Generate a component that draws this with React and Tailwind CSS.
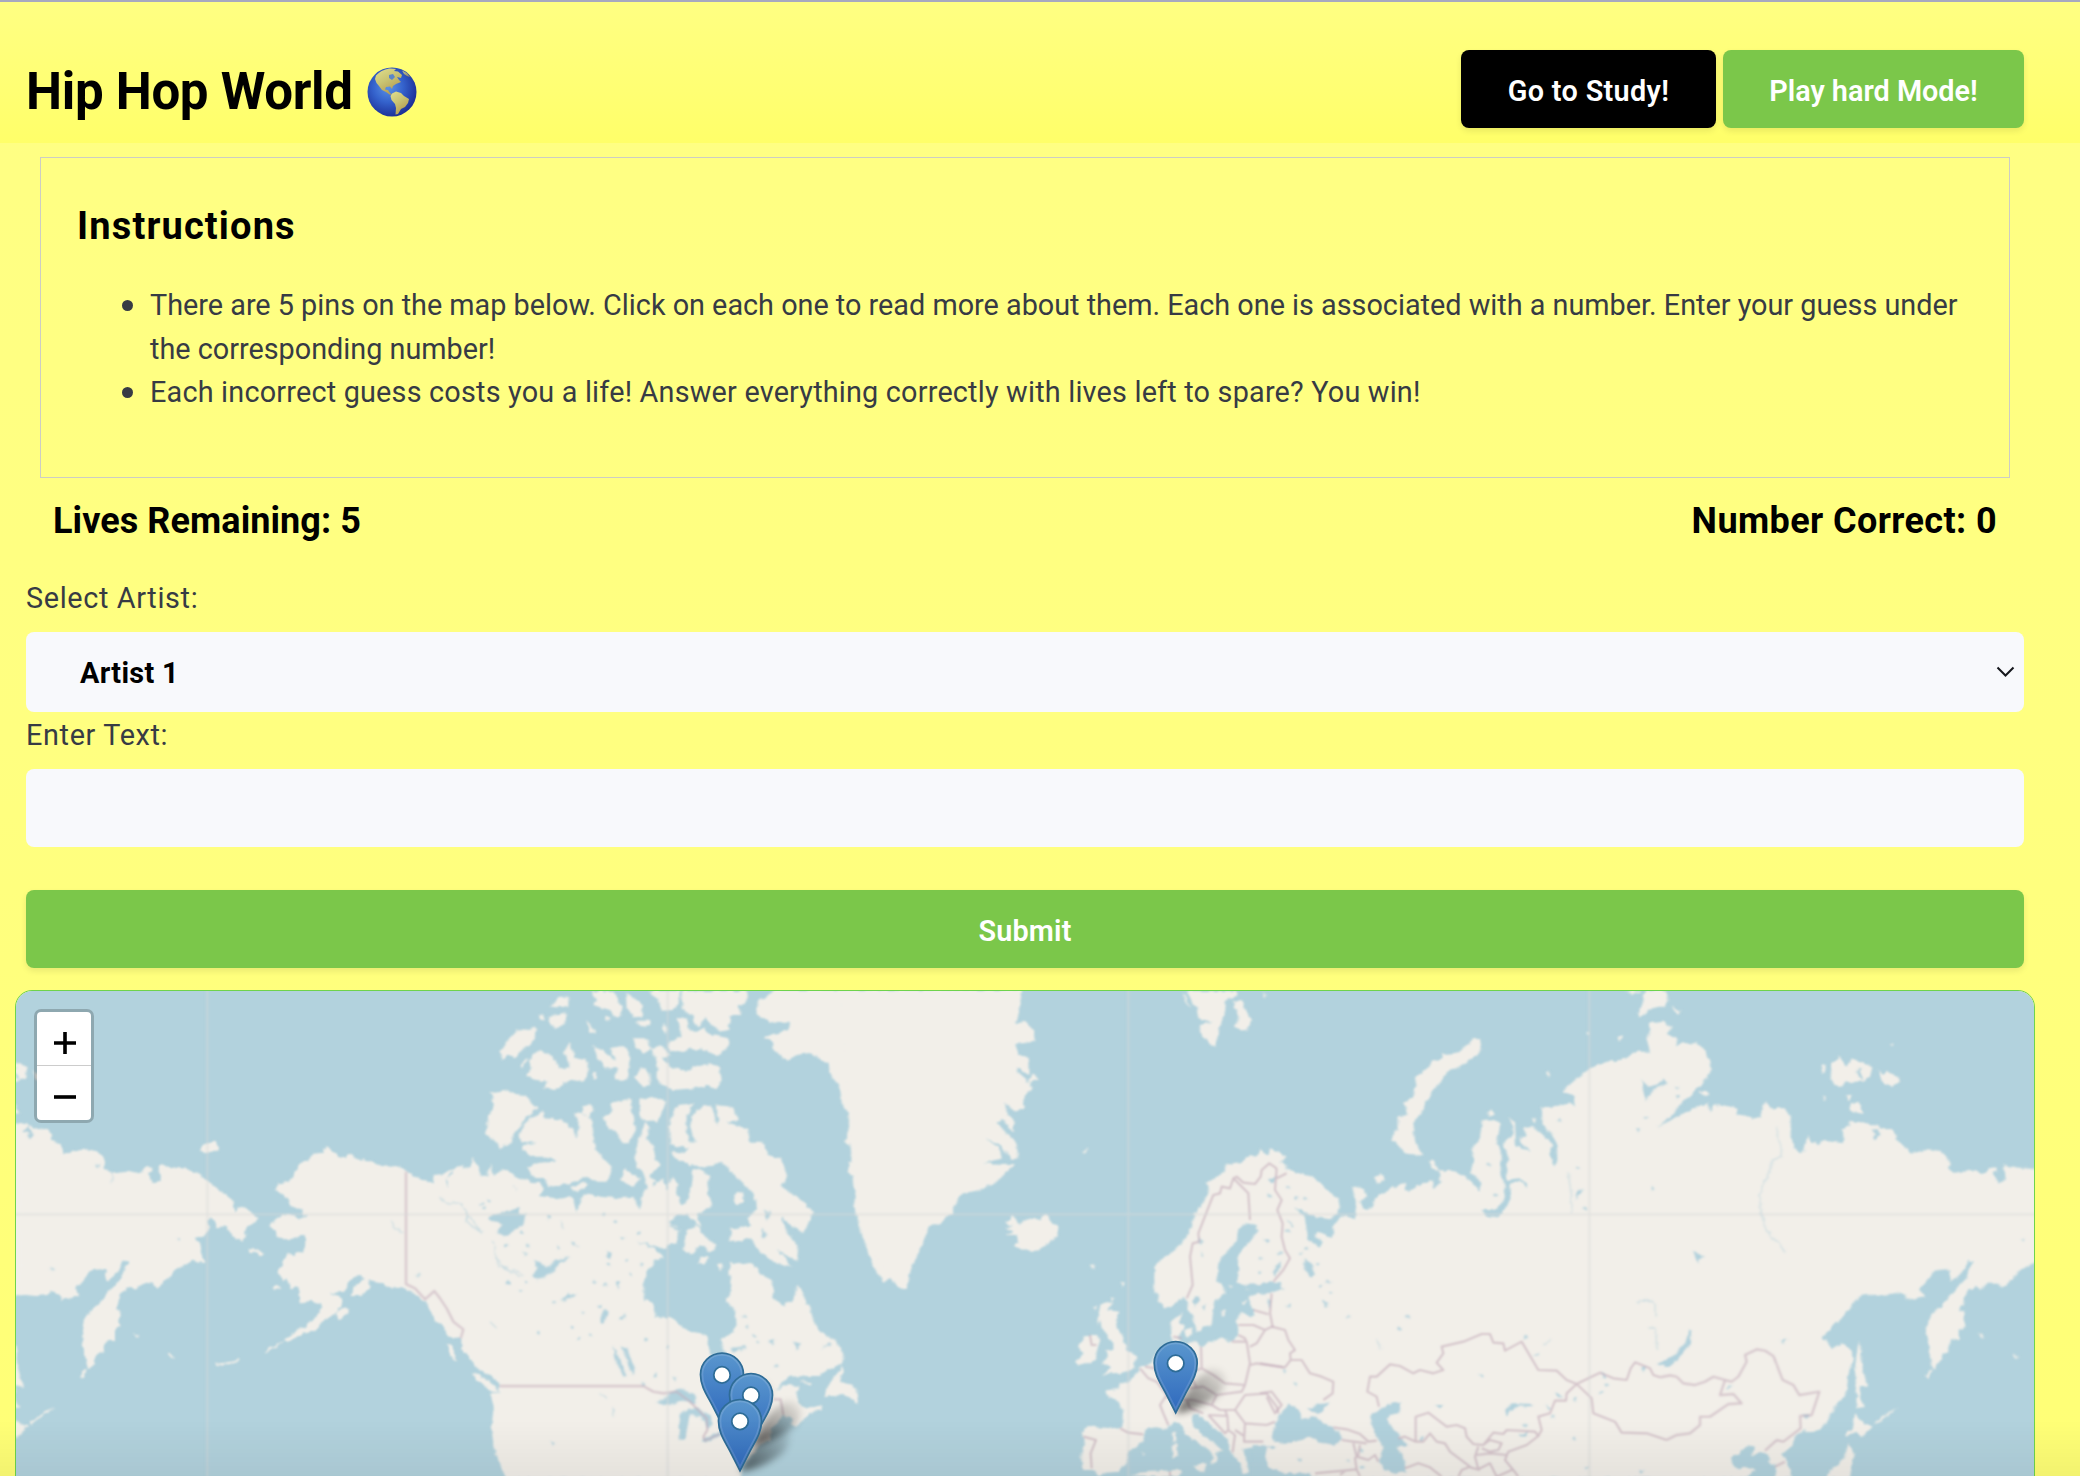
import React from "react";

const LAND = "#f2efe9";
const WATER = "#b2d2dd";

// Land outlines, grouped by map sheet. Each sheet has its own x origin.
const SHEETS = [
  {
    x: 0,
    land: [
      "30,428 75,432 100,440 118,450 140,448 158,462 150,475 165,488 185,500 192,518 205,520 230,512 262,508 290,514 308,528 315,548 310,565 330,578 380,572 420,580 435,562 455,562 458,572 445,580 452,598 465,610 480,600 483,590 473,570 480,555 515,562 560,566 600,582 625,604 665,635 697,660 703,700 712,682 740,686 750,690 777,718 765,728 738,742 735,768 728,785 700,770 685,752 680,738 650,742 640,720 632,712 625,722 630,745 615,768 583,775 600,788 605,812 614,850 578,842 525,872 500,900 472,926 460,912 440,908 415,918 408,930 395,920 372,930 360,950 358,965 345,990 362,995 358,1020 362,1038 345,1048 345,1080 325,1080 312,1095 310,1115 292,1125 285,1145 265,1170 258,1140 248,1090 246,1050 252,1020 268,992 290,980 310,955 345,915 365,895 375,860 388,845 370,842 362,865 345,885 320,905 315,885 318,870 300,868 270,872 250,900 228,925 238,948 210,955 185,960 180,945 155,935 140,945 110,948 80,945 30,946",
      "600,515 608,498 625,486 645,486 658,500 655,512 630,514 612,520",
      "745,808 765,808 780,815 792,822 785,828 768,820 748,815",
      "1400,565 1380,560 1360,575 1338,600 1345,622 1335,605 1350,580 1395,555 1370,560 1335,582 1300,585 1305,610 1270,600 1220,575 1190,555 1150,560 1090,538 1070,540 1045,520 1040,535 1020,532 1000,515 980,498 965,518 940,522 925,540 905,545 885,570 880,595 855,608 833,610 828,630 862,655 872,680 905,684 905,698 925,705 895,718 870,702 830,715 805,738 828,752 830,772 870,778 895,775 900,765 915,766 916,800 905,815 885,828 862,822 845,850 836,878 850,905 860,898 875,925 895,920 902,968 930,962 965,970 962,990 940,1020 915,1040 885,1050 850,1085 865,1086 900,1065 945,1050 975,1018 1012,995 1028,960 1010,945 990,940 1030,935 1045,905 1075,885 1095,893 1080,905 1060,925 1055,948 1075,948 1108,930 1112,915 1105,900 1135,905 1160,920 1205,925 1240,940 1275,965 1290,990 1310,1025 1325,1035 1345,1070 1385,1075 1385,1110 1410,1130 1425,1160 1460,1180 1495,1205 1503,1240 1470,1238 1482,1280 1475,1340 1482,1400 1500,1450 1520,1495 1560,1495 1560,700",
      "1415,1180 1440,1185 1480,1215 1502,1238 1480,1235 1440,1210",
      "1340,1092 1358,1095 1360,1115 1375,1145 1350,1125",
      "1008,1000 1030,982 1048,992 1035,1008 1015,1020",
      "815,922 828,915 845,925 825,931",
      "402,1058 412,1064 418,1076 408,1072",
      "262,1168 248,1195 240,1192 252,1172",
      "505,1120 518,1128 522,1136 510,1130",
      "850,1082 830,1102 790,1122 794,1114 822,1098",
      "645,1152 690,1146 720,1138 722,1143 690,1152 650,1158",
      "88,1330 130,1298 165,1282 130,1306 95,1334",
    ],
    lake: ["78,450 100,448 104,465 92,478 80,472 95,464", "1465,715 1520,692 1560,685 1560,740 1520,765 1490,755 1510,735", "530,774 540,776 535,782"],
  },
  {
    x: 1380,
    land: [
      "-20,595 -10,580 0,580 30,560 38,535 50,555 65,590 80,590 92,550 100,585 125,568 155,575 170,590 210,605 240,608 250,625 235,648 290,655 330,648 340,660 350,700 360,660 375,640 420,650 480,655 520,650 528,670 538,688 545,645 560,625 555,605 575,595 580,620 610,595 620,630 635,592 655,610 650,645 665,675 680,665 695,620 695,568 720,568 748,590 745,640 757,675 710,705 725,740 700,722 685,700 650,708 630,725 660,752 650,790 625,795 615,808 570,795 612,830 585,840 560,880 550,920 552,960 575,965 588,1012 635,1015 665,1040 700,1060 742,1065 745,1110 760,1135 790,1145 800,1130 790,1110 785,1078 815,1060 830,1035 825,990 798,965 815,930 808,880 810,845 850,855 880,850 905,885 935,900 940,955 970,978 1000,960 1013,912 1025,940 1050,985 1060,1020 1080,1055 1125,1080 1150,1120 1147,1150 1115,1165 1080,1188 1040,1188 985,1190 945,1230 980,1215 1018,1218 1010,1240 1015,1270 1040,1288 1085,1275 1080,1290 1050,1300 1010,1338 990,1335 1000,1320 970,1305 950,1330 935,1350 930,1378 900,1395 870,1430 842,1465 842,1495 138,1495 120,1450 102,1410 95,1340 102,1280 92,1240 122,1240 112,1205 45,1155 32,1130 5,1110 5,1075 -20,1070",
      "92,338 145,328 165,342 195,345 235,385 200,410 175,445 158,465 155,490 135,492 118,508 105,480 75,462 85,410 102,375",
      "250,393 250,415 300,418 320,430 340,450 350,480 357,440 345,400 365,398 390,415 398,440 405,510 455,560 440,605 410,605 380,590 330,610 265,622 255,598 215,588 203,560 240,548 288,545 265,530 215,530 188,512 190,495 230,488 185,485 175,465 190,435 215,410",
      "365,380 395,372 400,390 385,412 370,398",
      "120,215 150,170 180,148 215,150 218,138 230,150 215,190 180,215 165,232 145,225 125,242",
      "182,262 192,240 202,235 192,262",
      "268,80 300,50 325,50 325,78 295,82",
      "268,110 322,95 316,130 285,150 268,128",
      "240,100 250,108 255,122 242,118",
      "380,120 395,135 408,165 388,155",
      "200,290 215,262 205,240 240,210 280,230 300,265 330,262 312,215 330,185 345,235 380,240 385,275 370,305 335,300 310,310 290,330 250,325 265,305 230,300",
      "398,280 408,278 412,298 398,298",
      "400,195 430,215 465,240 450,205 480,198 505,208 508,250 500,300 465,298 475,265 435,265 410,230",
      "525,295 545,262 568,280 570,315 550,322",
      "390,33 460,36 485,80 480,112 465,112 450,90 420,82 400,75 408,60",
      "497,38 520,55 548,75 545,110 520,112 500,80",
      "565,33 660,33 655,70 640,90 605,92 595,60",
      "665,33 862,33 855,70 832,80 845,105 812,105 805,150 780,155 755,135 735,110 720,138 705,135 700,105 665,90",
      "650,115 680,115 690,155 730,148 760,165 805,175 808,195 775,228 755,215 740,212 725,205 710,212 690,205 670,215 630,212 625,190 665,170",
      "612,128 625,148 615,160 606,142",
      "518,175 560,175 575,205 550,222 530,205",
      "530,122 572,122 570,135 535,140",
      "432,112 452,112 445,125",
      "575,205 600,195 632,225 605,232 635,262 680,275 700,260 730,252 750,250 780,265 785,300 770,328 740,318 700,325 640,330 600,312 590,290 592,250",
      "538,358 580,350 618,362 600,410 590,425 555,425 538,405",
      "430,410 450,400 458,390 448,370 500,358 515,358 512,390 522,410 525,455 505,490 485,490 470,460 445,440",
      "555,428 568,440 560,475 580,500 585,530 600,560 570,585 590,605 560,610 550,580 530,565 525,520 535,480 545,455",
      "480,600 495,565 540,595 520,622 500,610",
      "655,375 700,370 680,410 678,450 690,485 705,490 690,440 695,410 730,375 757,380 770,435 778,420 765,375 820,380 837,420 800,425 865,450 870,485 905,485 930,530 965,535 982,590 965,620 1010,650 1062,695 1045,730 1030,760 1000,740 965,708 975,745 1015,800 1010,845 950,808 995,860 940,845 900,815 870,775 840,785 808,780 815,745 875,740 862,715 893,685 880,640 850,610 810,570 785,545 740,560 690,555 645,535 635,515 665,520 690,505 630,495 628,440 640,395",
      "668,810 680,750 710,735 740,775 772,800 752,815 720,795 700,822",
      "715,850 725,830 748,832 735,850",
      "772,850 788,855 782,875",
      "818,660 830,632 850,635 850,665 830,675",
      "330,625 370,605 385,612 350,640",
      "1092,1250 1110,1210 1145,1158 1150,1168 1140,1205 1180,1215 1198,1250 1190,1272 1175,1255 1150,1245",
      "1020,1200 1055,1208 1045,1216",
      "945,30 900,60 888,85 895,110 950,128 990,128 985,150 910,172 940,190 940,210 980,240 1030,218 1070,228 1105,255 1115,290 1140,320 1145,370 1170,410 1165,450 1155,485 1175,495 1195,465 1205,500 1225,520 1230,560 1170,525 1205,575 1190,592 1165,578 1165,545 1195,550 1235,590 1215,612 1190,625 1180,680 1195,720 1210,780 1240,860 1270,905 1300,895 1320,925 1340,930 1352,870 1385,800 1420,700 1420,30",
    ],
    lake: [
      "85,712 175,685 165,698 198,700 190,732 150,760 130,765 110,755 130,730 90,722",
      "215,890 232,865 222,838 262,862 290,838 330,832 300,850 272,880 232,900",
      "300,962 325,940 355,946 325,955",
      "435,985 445,1000 430,1030 420,1025",
      "485,1098 500,1105 525,1165 518,1188 500,1145",
      "460,1100 475,1130 500,1188 490,1190 462,1130",
      "590,1270 620,1250 630,1235 650,1225 700,1240 708,1270 660,1265 640,1275",
      "660,1300 680,1290 715,1285 750,1305 760,1330 745,1345 720,1310 690,1305 675,1375 660,1380 655,1330",
      "725,1378 775,1355 790,1362 740,1388",
      "440,815 455,818 450,838 438,832", "185,815 203,822 195,828", "625,725 655,748 645,750",
      "810,1105 855,1098 860,1104 820,1115", "925,1080 945,1075 940,1095 928,1092", "998,1085 1025,1090 1012,1108 1005,1095", "1080,1108 1115,1088 1112,1095", "272,1382 285,1390 280,1400", "905,745 920,765 905,775", "910,690 935,700 920,720",
      "480,770 498,775 485,780", "530,785 560,790 610,806 570,800", "640,1190 652,1195 645,1205", "545,1205 555,1215 545,1220", "470,905 480,905 475,930", "365,995 375,998 368,1006", "478,1018 498,998 490,1018",
    ],
  },
  {
    x: 2460,
    land: [
      "60,30 607,30 600,70 600,90 588,130 615,125 640,150 645,185 610,190 585,190 595,225 620,230 628,245 628,285 590,262 600,285 625,305 640,280 658,298 630,305 635,330 610,350 612,385 585,395 555,370 560,395 585,425 580,460 550,420 530,425 555,455 590,490 595,535 575,540 545,500 500,475 540,510 545,535 490,550 585,553 525,610 470,632 430,640 415,655 395,700 350,735 315,740 300,790 275,850 262,925 245,930 215,900 150,800 100,620",
      "555,740 580,738 555,730 580,705 600,735 620,715 645,718 660,718 680,703 690,720 715,740 715,765 690,785 650,812 630,815 578,798 595,790 590,765 558,765 580,755",
      "1100,33 1250,33 1255,50 1218,60 1215,95 1200,140 1185,203 1165,185 1140,160 1140,135 1175,125 1135,115 1130,85 1115,65",
      "1240,60 1265,65 1275,90 1297,120 1280,155 1245,140 1255,110",
      "1086,38 1098,50 1112,84 1100,72",
      "1400,560 1380,545 1400,530 1370,512 1350,508 1345,525 1320,508 1310,530 1290,525 1265,545 1250,548 1215,555 1215,575 1190,590 1160,610 1165,640 1140,680 1125,700 1115,740 1095,780 1065,810 1025,840 1003,860 1003,920 1015,965 1040,985 1065,970 1095,950 1105,985 1125,1030 1130,1058 1145,1055 1150,1040 1175,1035 1182,970 1215,940 1210,920 1190,905 1195,850 1215,820 1250,785 1255,745 1275,730 1310,735 1312,755 1290,785 1262,810 1252,835 1258,870 1250,905 1285,928 1340,910 1400,905 1400,925 1345,938 1320,940 1285,950 1290,970 1300,990 1300,1005 1285,1013 1265,995 1250,1020 1255,1050 1250,1070 1230,1085 1205,1072 1165,1090 1140,1100 1130,1085 1085,1098 1075,1070 1095,1040 1078,1030 1088,995 1070,1010 1052,1025 1055,1080 1060,1105 1010,1120 990,1150 960,1165 940,1195 920,1210 900,1205 895,1228 855,1230 860,1245 895,1265 910,1290 905,1340 880,1345 830,1342 805,1338 785,1355 792,1390 782,1430 790,1470 820,1470 840,1490 860,1478 895,1475 920,1450 925,1415 970,1385 975,1350 1000,1342 1030,1350 1060,1325 1085,1335 1100,1365 1135,1390 1165,1410 1180,1430 1170,1455 1190,1440 1190,1415 1210,1412 1160,1375 1120,1340 1115,1305 1130,1298 1150,1320 1190,1350 1225,1380 1230,1420 1260,1445 1268,1480 1285,1475 1280,1430 1265,1410 1300,1400 1335,1395 1328,1410 1340,1445 1350,1470 1380,1478 1400,1490",
      "845,970 880,965 865,990 898,995 885,1035 905,1060 920,1110 950,1130 940,1165 905,1180 865,1180 842,1193 870,1165 845,1150 865,1130 855,1110 880,1110 880,1090 860,1065 845,1045 840,1020 830,1035 835,1000",
      "775,1095 800,1065 835,1065 838,1090 830,1115 828,1140 780,1158 768,1145 785,1125",
      "1092,1052 1115,1042 1112,1065 1100,1075", "1202,1010 1210,988 1218,990 1210,1008", "1225,915 1240,920 1228,924",
      "930,1490 960,1478 1060,1470 1090,1470 1075,1490",
      "1058,1362 1068,1355 1070,1385 1060,1385", "1055,1398 1070,1390 1074,1428 1058,1436",
      "1115,1456 1160,1450 1152,1478 1140,1470", "965,1415 976,1422 968,1428",
      "812,855 826,853 820,868", "902,905 912,908 905,925", "785,518 805,505 800,516", "815,985 828,978 825,992", "872,952 882,955 876,965", "1265,965 1280,960 1275,978",
    ],
    lake: [
      "1115,965 1130,945 1142,950 1138,965 1125,978", "1145,985 1158,970 1150,992",
      "1135,770 1148,785 1140,795", "1140,815 1150,830 1144,832", "1330,775 1350,782 1340,790", "1345,600 1365,590 1358,608", "1342,955 1352,965 1348,990",
    ],
  },
  {
    x: 3780,
    land: [
      "60,560 100,575 160,592 200,630 235,655 240,690 210,718 165,712 105,682 135,715 145,780 180,802 188,785 165,770 170,755 190,760 215,775 222,765 220,735 250,705 285,718 288,670 283,640 272,618 310,625 322,648 298,665 315,688 338,685 345,655 390,625 435,608 435,630 450,632 480,615 515,600 520,628 542,605 535,570 590,575 640,610 660,633 660,605 632,575 642,535 632,510 658,480 668,420 700,418 722,430 710,490 722,510 722,590 738,620 728,665 705,690 665,690 680,708 715,712 735,690 752,655 748,612 780,603 800,625 800,610 775,595 740,600 738,580 745,530 730,490 755,470 760,440 745,410 765,430 768,500 812,513 782,490 778,470 800,470 790,445 815,440 860,475 880,495 868,520 885,560 892,540 890,490 870,455 848,435 845,385 935,370 945,380 940,345 905,335 945,300 990,265 1040,245 1085,240 1130,215 1170,215 1160,180 1180,145 1210,125 1235,145 1215,165 1250,180 1250,1495 60,1495",
      "1155,33 1215,30 1225,60 1210,80 1165,90 1140,110 1133,98 1148,70", "1095,33 1145,33 1120,43",
      "640,175 660,180 665,205 645,230 600,258 560,280 530,320 508,345 490,385 465,420 458,460 465,490 490,528 435,520 415,500 410,485 396,478 400,455 415,450 415,410 440,400 435,370 460,345 470,320 465,295 490,275 515,245 540,240 550,222 590,218 620,200",
      "508,545 516,538 538,572 518,565", "345,590 360,578 378,595 350,614", "682,395 695,388 705,405 685,410",
      "975,158 984,155 982,166", "1072,172 1088,165 1080,182", "860,275 872,280 866,292", "815,415 828,415 824,428", "10,38 20,45 12,50",
    ],
    lake: [
      "35,1370 45,1330 70,1290 88,1272 118,1290 125,1318 160,1308 195,1330 235,1355 247,1378 225,1394 180,1388 145,1372 110,1380 75,1392 45,1388",
      "140,1290 170,1275 210,1262 190,1290 175,1302",
      "380,1275 400,1265 422,1270 418,1300 390,1305 380,1318 395,1345 415,1360 418,1375 445,1395 410,1400 435,1440 435,1475 405,1482 375,1470 357,1445 372,1405 350,1370 330,1325 332,1305",
      "-60,915 0,912 40,905 70,925 35,938 0,942",
      "-20,1405 20,1398 15,1420 20,1455 60,1478 150,1480 150,1495 -20,1495",
      "20,1398 55,1398 35,1406",
      "135,835 150,845 165,885 155,895 135,870", "185,958 203,970 195,982", "25,600 48,590 40,610", "78,715 102,740 95,742",
      "735,1290 755,1270 820,1272 825,1278 765,1280 740,1308", "855,1275 870,1290 862,1292", "885,1235 908,1250 890,1248", "778,1362 805,1358 795,1372", "1022,1180 1038,1188 1030,1196", "1145,1160 1155,1160 1150,1180",
      "1195,1155 1235,1135 1262,1100 1262,1130 1225,1160",
      "1145,300 1165,320 1205,310 1210,295 1225,312 1180,328 1160,365 1150,335", "1190,448 1235,410 1262,380 1262,405 1230,420", "1128,445 1142,445 1135,456", "945,660 955,630 972,628", "525,1275 550,1275 540,1285", "480,1375 492,1365 488,1382", "35,880 62,842 62,862 45,890", "1138,1470 1152,1470 1145,1482",
    ],
  },
  {
    x: 4980,
    land: [
      "40,205 60,190 110,190 130,205 150,240 155,270 130,310 90,345 50,385 35,405 70,402 110,380 145,370 150,398 155,378 185,375 230,385 230,402 290,415 303,415 305,380 318,362 335,385 370,385 392,408 392,470 405,505 422,523 432,515 442,466 452,488 475,492 495,482 548,490 550,470 545,445 570,440 568,422 620,430 620,946 600,946 575,975 540,1020 485,1072 500,1080 520,1105 540,1090 560,1095 575,1115 578,1140 565,1185 560,1235 520,1290 485,1345 455,1358 430,1350 400,1380 398,1400 365,1420 385,1450 393,1495 345,1495 350,1460 325,1448 325,1425 300,1415 275,1430 282,1405 265,1395 245,1412 215,1435 215,1445 235,1470 250,1460 288,1470 255,1495 40,1495",
      "0,33 20,40 25,60 15,75 0,85",
      "-35,130 10,125 32,145 20,162 52,175 45,208 -20,215",
      "595,1085 603,1100 605,1150 622,1222 600,1215 598,1250 612,1282 590,1285 588,1230 585,1160",
      "583,1300 605,1325 638,1340 605,1372 585,1355 560,1370 555,1365 575,1345",
      "565,1390 585,1420 575,1460 570,1495 500,1495 510,1470 540,1450 558,1420",
      "512,290 515,250 538,228 562,265 575,235 610,250 637,262 630,290 605,305 580,305 552,308 545,322 520,310",
      "650,268 670,285 685,275 715,290 720,305 695,318 665,300", "568,385 575,365 600,372 612,402 590,398", "558,345 572,345 570,362 562,362", "488,255 497,258 494,280 486,275", "485,348 492,348 500,362 494,362",
      "118,335 140,330 148,340 135,352", "685,195 700,190 698,198", "36,78 50,88 62,95 50,102",
      "600,430 632,432 665,448 692,448 710,468 704,478 735,498 745,520 690,540 600,540",
    ],
    lake: [
      "-10,1152 40,1130 75,1090 88,1050 95,1052 90,1095 50,1138 20,1160",
      "0,312 12,300 10,295 22,310", "-10,440 30,410 55,385 80,355 40,412", "620,455 640,440 655,462 645,478 635,470 642,460", "590,275 598,260 606,262 598,275 612,298 598,292",
      "98,815 115,822 132,830 118,836 112,855 108,832", "362,1082 382,1078 372,1092", "205,1215 215,1218 206,1228", "425,1303 448,1303 440,1318", "45,320 58,322 52,330", "44,346 56,346 50,356",
    ],
  },
];

const BORDERS = [
  [0, "M1218,575V912L1245,925 1275,958 1303,933 1320,955 1340,985 1360,1025 1390,1048 1382,1075"],
  [1380, "M118,1218H550L580,1235 610,1240 650,1235 690,1265 740,1315 742,1350 730,1370 735,1382 780,1362M940,1258H962L970,1305"],
  [2460, "M1100,955L1118,915 1110,830 1118,790 1138,785 1135,760 1170,670 1180,645 1200,640 1205,620 1230,625 1240,595 1285,640 1290,720M1240,595L1250,590 1270,608 1305,612 1322,590 1325,570 1348,550 1370,565M1355,940L1350,1000 1358,1040M1300,990L1345,1003M1255,1035H1300L1335,1050 1310,1090 1290,1100M1335,1050L1360,1038M1235,1085H1280L1290,1150 1275,1215M1255,1065L1275,1075 1280,1088M1290,1155L1310,1150 1390,1162M1143,1100L1145,1165 1180,1185 1215,1210 1275,1215 1265,1235 1190,1245 1150,1220 1110,1225M1145,1165L1110,1180 1130,1225M1190,1245L1175,1275 1200,1290 1245,1290 1275,1245 1340,1240 1370,1280 1375,1300M1245,1290L1275,1330 1340,1335 1365,1325M1275,1330L1272,1385 1330,1385M1165,1305L1222,1308 1225,1350 1245,1365 1240,1400 1238,1418M1165,1305L1215,1360 1225,1350M1215,1290L1222,1308M1245,1350L1275,1370M960,1165L985,1195 1010,1205 1040,1245 1020,1275 1030,1300 1045,1335M1035,1250L1080,1258 1120,1260 1175,1275M1100,1260L1110,1285 1150,1300M975,1160L1005,1165M900,1345L925,1358 970,1363M790,1370L828,1380 812,1420 815,1465M810,1065L815,1095 830,1095M1060,1070L1085,1075M1050,1475V1490"],
  [3780, "M50,565L45,630 65,660 52,690 68,730 65,770 75,810 90,835 70,870 40,905M45,598L80,580M35,1040L75,1050 85,1080 105,1110 90,1120 92,1140 125,1140 150,1180 185,1190 220,1205 218,1240 190,1260M92,1140L75,1162 0,1150M0,1240L35,1235 65,1275 45,1300 20,1250M357,1280L350,1250 322,1235 330,1190 350,1190 390,1153 420,1158 460,1180 480,1170 520,1180 550,1170 530,1148 550,1120 545,1100 610,1085 665,1062 690,1062 700,1088 730,1090 735,1112 785,1085 835,1170 890,1172 920,1200 950,1212 1020,1178 1060,1195 1100,1200 1112,1165 1125,1147 1170,1165 1180,1185 1200,1192M950,1212L920,1240 918,1262 885,1262 870,1300 835,1310 845,1350 835,1368 825,1355 740,1350 730,1362 700,1358 670,1395 640,1392 620,1370 615,1345 590,1335 560,1340 505,1298 467,1310V1385L435,1370 415,1375M467,1385H490L510,1360 530,1385 555,1390 570,1415 630,1460 605,1470 595,1490M435,1465L475,1450 510,1462 545,1490M835,1368L800,1395 745,1415 735,1440 760,1470 775,1490M655,1400L645,1430 655,1468 690,1450 710,1490 760,1468M670,1395L690,1380 725,1390 715,1410 690,1415 665,1405M740,1425L690,1420 650,1425M630,1462L660,1470M950,1212L995,1255 1000,1300 1065,1325 1085,1358 1160,1360 1220,1380M220,1342L260,1348 300,1362 325,1385 350,1382M245,1380L280,1385 320,1390M280,1390L290,1430 325,1440 345,1425 355,1445M165,1480L290,1468M300,1395L295,1425 285,1435 290,1468 300,1490M240,1485L260,1470"],
  [4980, "M0,1192L30,1186 50,1190M20,1380L50,1365 90,1360 120,1335 120,1310 150,1310 205,1272 245,1270 220,1242 180,1245 195,1200 160,1190 135,1205 105,1215 70,1210 50,1190M195,1200L215,1205 235,1190 260,1145 255,1125 290,1108 315,1112 340,1128 368,1200 400,1215 418,1245 478,1235 455,1305 420,1308 422,1345 370,1385 350,1380 315,1412M345,1460L375,1445"],
];

const RIVERS = [
  [4980, "M352,440V470L365,500 362,530 340,540 325,580 310,610 297,650 305,700 318,750 340,775 380,815"],
  [3780, "M1130,968L1160,958 1185,970 1185,1010M1165,1040L1185,1045 1192,1110M925,580L935,650 932,700M350,1080L362,1108M870,1080L850,1095"],
  [0, "M1320,650L1345,672 1380,668 1405,705 1400,725 1450,760M1480,780L1495,855 1560,890M1172,720L1185,745 1205,755M337,575L335,610M1540,620L1550,630"],
  [1380, "M20,700L60,750M105,830L130,860 190,885M90,1025L110,1045M455,1280L462,1310M420,1240L445,1255M300,725L315,745M260,705L275,712M335,790L355,798"],
];

const SCATTER = [
  [1380, [[138, 797], [203, 797], [268, 710], [295, 800], [340, 790], [445, 852], [502, 840], [536, 762], [545, 855], [430, 702], [466, 722], [143, 908], [182, 933], [198, 908], [284, 968], [334, 1042], [357, 1075], [393, 1066], [420, 980], [404, 905], [436, 915], [510, 882], [558, 1077], [234, 1057], [185, 757], [862, 1040], [853, 1008], [885, 1068], [895, 1085], [950, 1160], [585, 1185], [622, 1102], [85, 662], [66, 672], [72, 686]]],
  [3780, [[28, 648], [84, 620], [22, 782], [60, 818], [83, 752], [123, 818], [138, 805], [172, 852], [183, 919], [204, 907], [211, 937], [86, 978], [266, 1008], [418, 1047], [444, 1012], [797, 1072], [828, 1123], [664, 1187], [796, 1336], [878, 1311], [946, 1258], [942, 1374], [1022, 1240], [1038, 1215], [980, 1462], [106, 1212], [72, 1172], [264, 1441], [118, 1440], [305, 1462], [304, 1410], [685, 555], [705, 645], [898, 421], [1157, 412], [1178, 626], [953, 565], [973, 684], [110, 655], [134, 655]]],
  [0, [[1255, 885], [1518, 797], [1523, 908], [295, 556], [155, 868]]],
  [2460, [[1348, 645], [1322, 835], [1318, 875]]],
];

function Land() {
  return (
    <>
      {SHEETS.map((s) => (
        <g key={s.x} transform={`translate(${s.x} 0)`}>
          {s.land.map((p, i) => (
            <polygon key={i} points={p} />
          ))}
        </g>
      ))}
      {SHEETS.map((s) => (
        <g key={s.x} transform={`translate(${s.x} 0)`} fill={WATER}>
          {s.lake.map((p, i) => (
            <polygon key={i} points={p} />
          ))}
        </g>
      ))}
    </>
  );
}

function Pin({ x, y }) {
  return (
    <g transform={`translate(${x} ${y}) scale(1.79)`}>
      <path
        d="M-12 -28.2C-12 -21.7-8.6 -17.1-5.6 -11.4L0 -.4L5.6 -11.4C8.6 -17.1 12 -21.7 12 -28.2A12 12 0 0 0-12 -28.2Z"
        fill="url(#pin)"
        stroke="#2e6c97"
        strokeWidth="1"
      />
      <path
        d="M-11 -28.2C-11 -22-7.7 -17.4-4.7 -11.8L0 -2.6L4.7 -11.8C7.7 -17.4 11 -22 11 -28.2A11 11 0 0 0-11 -28.2Z"
        fill="none"
        stroke="#ffffff"
        strokeOpacity=".13"
        strokeWidth="1.1"
      />
      <circle cy="-28" r="4.6" fill="#fff" stroke="#2e6c97" strokeWidth="1" />
    </g>
  );
}

const PINS = [
  [722, 1425],
  [751, 1445.5],
  [740, 1471.5],
  [1175.7, 1413.5],
];

function WorldMap() {
  return (
    <svg className="block h-full w-full" viewBox="16 991 2018 485" preserveAspectRatio="xMinYMin slice">
      <defs>
        <linearGradient id="pin" x1="0" y1="0" x2="0" y2="1">
          <stop offset="0" stopColor="#5a97ce" />
          <stop offset="1" stopColor="#2e68bd" />
        </linearGradient>
        <linearGradient id="shade" x1="0" y1="1" x2="1" y2="0">
          <stop offset="0" stopColor="#000" stopOpacity=".6" />
          <stop offset="1" stopColor="#000" stopOpacity=".02" />
        </linearGradient>
        <filter id="coast" x="0" y="980" width="2080" height="520" filterUnits="userSpaceOnUse">
          <feTurbulence type="fractalNoise" baseFrequency=".16" numOctaves="2" seed="4" result="n" />
          <feDisplacementMap in="SourceGraphic" in2="n" scale="5" xChannelSelector="R" yChannelSelector="G" />
        </filter>
        <filter id="soft" x="0" y="980" width="2080" height="520" filterUnits="userSpaceOnUse">
          <feGaussianBlur stdDeviation=".8" />
        </filter>
        <filter id="blur" x="-30%" y="-30%" width="160%" height="160%">
          <feGaussianBlur stdDeviation="3.5" />
        </filter>
      </defs>
      <rect x="0" y="980" width="2080" height="520" fill={WATER} />
      <g filter="url(#soft)">
        <g filter="url(#coast)">
          <g transform="translate(0 980) scale(.333333)" fill={LAND}>
            <g id="land">
              <Land />
            </g>
            <use href="#land" x="-5534" />
            <use href="#land" x="5534" />
            <g fill="none" stroke={WATER} strokeOpacity=".5" strokeWidth="4">
              {RIVERS.map(([x, d]) => (
                <path key={x} d={d} transform={`translate(${x} 0)`} />
              ))}
            </g>
            {SCATTER.map(([x, pts]) => (
              <g key={x} fill={WATER} fillOpacity=".8" transform={`translate(${x} 0)`}>
                {pts.map(([cx, cy]) => (
                  <ellipse key={cx + "-" + cy} cx={cx} cy={cy} rx="6" ry="4.5" />
                ))}
              </g>
            ))}
          </g>
        </g>
        <g transform="translate(0 980) scale(.333333)">
          <g fill="none" stroke="#c5adbc" strokeOpacity=".65" strokeWidth="6.5" strokeLinejoin="round">
            {BORDERS.map(([x, d]) => (
              <path key={x} d={d} transform={`translate(${x} 0)`} />
            ))}
          </g>
          <path d="M0 703H6200M622 0V1500M2003 0V1500M3385 0V1500M4768 0V1500" fill="none" stroke="#d5d8d8" strokeOpacity=".6" strokeWidth="5" />
        </g>
      </g>
      {PINS.map(([x, y]) => (
        <path
          key={x}
          d="M0 0C8 -16 18 -38 36 -44C50 -46 54 -32 44 -20C34 -10 16 -2 0 0Z"
          transform={`translate(${x} ${y})`}
          fill="url(#shade)"
          filter="url(#blur)"
        />
      ))}
      {PINS.map(([x, y]) => (
        <Pin key={x} x={x} y={y} />
      ))}
    </svg>
  );
}

function Globe() {
  return (
    <svg className="h-[50px] w-[50px]" viewBox="0 0 50 50">
      <defs>
        <radialGradient id="sea" cx=".42" cy=".4" r=".62">
          <stop offset="0" stopColor="#5b93e6" />
          <stop offset=".5" stopColor="#3462cc" />
          <stop offset="1" stopColor="#1c2f96" />
        </radialGradient>
        <linearGradient id="ground" x1="0" y1="0" x2=".6" y2="1">
          <stop offset="0" stopColor="#e2e08c" />
          <stop offset=".5" stopColor="#c9c473" />
          <stop offset="1" stopColor="#b59a4e" />
        </linearGradient>
      </defs>
      <circle cx="25" cy="25" r="24.5" fill="url(#sea)" />
      <g fill="url(#ground)">
        <path d="M9 8.5C14 3.5 19 1.5 24 1.5L29 2L27 4L31 4.5L35 8L34 11L30 10L32 13L34 15L29 17L26 19L25 22L23 19.5L19 20L18 22.5L21 23L23 26L25 27.500L23 27.800L19 25L15 23L12 19L9.500 16L8 12Z" />
        <path d="M25 26.500L29 24.500L34 26L37 29L42 32L41 36L38 40L34 42L31 47L28.500 47.500L29 41L28 37L24.500 33L23.500 29Z" />
        <path d="M35 3.500L40 6L43 10L40 9L37 7Z" opacity=".8" />
      </g>
      <path d="M22 8L26 7L28 10L25 13L22 11Z" fill="#5a86c9" />
    </svg>
  );
}

const button = "flex items-center justify-center rounded-[8px] pt-[5px] text-[28.8px] font-semibold text-white shadow-[0_3px_6px_rgba(0,0,0,0.09)]";

function Bullet({ className, children }) {
  return (
    <li className={"flex gap-[17px] " + className}>
      <span className="mt-[16px] h-[11px] w-[11px] shrink-0 rounded-full bg-[#373b44]" />
      <span>{children}</span>
    </li>
  );
}

export default function App() {
  return (
    <div className="relative h-[1476px] w-[2080px] overflow-hidden bg-linear-to-b from-[#ffff84] via-[#ffff80] to-[#ffff76] font-[Roboto,sans-serif] text-[#373b44]">
      <header className="flex h-[143px] items-start justify-between border-t-2 border-[#a7a9c0] bg-linear-to-b from-[#ffff82] to-[#ffff69] pr-[56px] pl-[26px]">
        <h1 className="mt-[60px] flex h-[60px] items-center gap-[14px] text-[51px] leading-[60px] font-bold text-black">
          <span className="tracking-[-0.3px]">Hip Hop World</span>
          <Globe />
        </h1>
        <div className="mt-[48px] flex gap-[7px]">
          <button className={button + " h-[78px] w-[255px] bg-black tracking-[0.35px]"}>Go to Study!</button>
          <button className={button + " h-[78px] w-[301px] bg-[#7bc74a]"}>Play hard Mode!</button>
        </div>
      </header>

      <section className="mt-[14px] ml-[40px] h-[321px] w-[1970px] border border-[#cdcdc4] pl-[36px]">
        <h2 className="mt-[42px] text-[38px] leading-[52px] font-bold tracking-[1.15px] text-black">Instructions</h2>
        <ul className="mt-[32px] pl-[45px] text-[28.8px] leading-[43.500px]">
          <Bullet className="">
            There are 5 pins on the map below. Click on each one to read more about them. Each one is associated with a number. Enter your guess under
            <br />
            the corresponding number!
          </Bullet>
          <Bullet className="tracking-[0.2px]">Each incorrect guess costs you a life! Answer everything correctly with lives left to spare? You win!</Bullet>
        </ul>
      </section>

      <div className="mt-[17px] flex justify-between pr-[83px] pl-[53px] text-[36px] leading-[52px] font-bold text-black">
        <span className="tracking-[0.08px]">Lives Remaining: 5</span>
        <span className="tracking-[0.4px]">Number Correct: 0</span>
      </div>

      <form className="mt-[29px] ml-[26px] w-[1998px]">
        <label className="block h-[56px] pt-px text-[28.800px] leading-[43px] tracking-[0.65px]">Select Artist:</label>
        <div className="flex h-[80px] items-center justify-between rounded-[8px] bg-[#f8f9fc] pr-[9px] pl-[54px] text-[28.800px] font-bold text-black">
          <span className="pt-[4px] tracking-[0.35px]">Artist 1</span>
          <svg className="h-[12px] w-[19px]" viewBox="0 0 19 12" fill="none" stroke="#15171c" strokeWidth="2">
            <path d="M1.500 1.500L9.500 9.500L17.500 1.500" />
          </svg>
        </div>
        <label className="block h-[57px] pt-[2px] text-[28.800px] leading-[43px] tracking-[0.65px]">Enter Text:</label>
        <div className="h-[78px] rounded-[8px] bg-[#f8f9fc]" />
        <button className={button + " mt-[43px] h-[78px] w-full bg-[#7bc74a] tracking-[0.2px]"}>Submit</button>
      </form>

      <div className="relative mt-[22px] ml-[15px] h-[560px] w-[2020px] overflow-hidden rounded-[17px] border border-[#6fd34c]">
        <div className="h-[485px] w-[2018px]">
          <WorldMap />
        </div>
        <div className="absolute top-[18px] left-[18px] flex h-[114px] w-[60px] flex-col rounded-[7px] border-3 border-black/20 bg-white bg-clip-padding">
          <div className="flex h-[54px] items-center justify-center border-b border-[#ccc]">
            <svg className="ml-px mt-[9px] h-[22px] w-[22px]" viewBox="0 0 22 22" stroke="#000" strokeWidth="3.600">
              <path d="M0 11H22M11 0V22" />
            </svg>
          </div>
          <div className="flex h-[54px] items-center justify-center">
            <svg className="ml-px mt-[8px] h-[22px] w-[22px]" viewBox="0 0 22 22" stroke="#000" strokeWidth="3.600">
              <path d="M0 11H22" />
            </svg>
          </div>
        </div>
      </div>
      <div className="pointer-events-none absolute inset-x-0 bottom-0 h-[56px] bg-linear-to-b from-transparent to-black/5" />
    </div>
  );
}
